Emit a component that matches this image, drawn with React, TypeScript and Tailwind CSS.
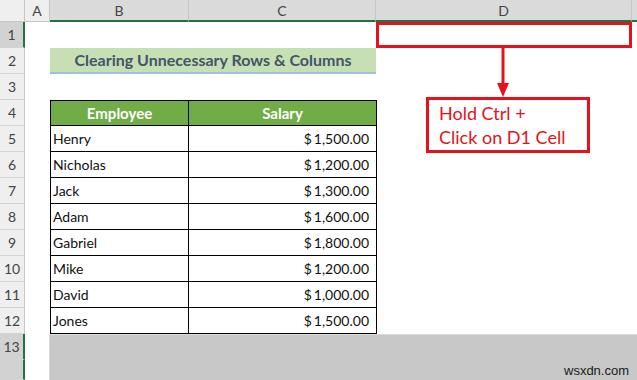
import React from "react";

const ROWS = 14;
const data: Record<number, [string, string]> = {
  5: ["Henry", "1,500.00"],
  6: ["Nicholas", "1,200.00"],
  7: ["Jack", "1,300.00"],
  8: ["Adam", "1,600.00"],
  9: ["Gabriel", "1,800.00"],
  10: ["Mike", "1,200.00"],
  11: ["David", "1,000.00"],
  12: ["Jones", "1,500.00"],
};

function RowHeader({ n, selected }: { n: number | null; selected: boolean }) {
  return (
    <div
      className={
        "w-[25px] shrink-0 h-full flex items-center justify-center text-[14px] text-[#444] border-b border-[#d4d4d4] " +
        (selected
          ? "bg-[#d2d2d2] border-r-2 border-r-[#217346]"
          : "bg-[#efefef] border-r border-r-[#c6c6c6]")
      }
    >
      {n}
    </div>
  );
}

function Row({ n }: { n: number }) {
  const selected = n === 1 || n >= 13;
  const gray = n >= 13;
  let content: React.ReactNode = null;
  if (n === 2) {
    content = (
      <div className="w-[326px] h-full bg-[#c6e0b4] border-b-2 border-[#9bc2e6] flex items-center justify-center font-bold text-[16px] text-[#44546a]">
        Clearing Unnecessary Rows &amp; Columns
      </div>
    );
  } else if (n === 4) {
    content = (
      <div className="flex w-[327px] h-full bg-[#70ad47] border border-black text-white font-bold text-[15px]">
        <div className="w-[138px] flex items-center justify-center border-r border-black">Employee</div>
        <div className="w-[187px] flex items-center justify-center">Salary</div>
      </div>
    );
  } else if (data[n]) {
    const [name, sal] = data[n];
    content = (
      <div className="flex w-[327px] h-full bg-white border-x border-b border-black text-[14px] text-[#111]">
        <div className="w-[138px] flex items-center pl-[2px] border-r border-black">{name}</div>
        <div className="w-[187px] flex items-center justify-end pr-[7px]">
          <span className="mr-[2px]">$</span>
          <span>{sal}</span>
        </div>
      </div>
    );
  }
  return (
    <div className={"flex " + (n === 14 ? "h-[20px]" : "h-[26px]")}>
      <RowHeader n={n <= 13 ? n : null} selected={selected} />
      <div className={"w-[25px] shrink-0 h-full bg-white " + (gray ? "border-r border-[#d8d8d8]" : "")} />
      {gray ? (
        <div className={"flex-1 h-full bg-[#c8c8c8] " + (n === 13 ? "border-t border-[#dcdcdc]" : "")} />
      ) : (
        <div className="flex-1 h-full bg-white">{content}</div>
      )}
    </div>
  );
}

export default function App() {
  return (
    <div
      className="relative w-[637px] h-[380px] overflow-hidden bg-white"
      style={{ fontFamily: "Lato, 'Liberation Sans', sans-serif" }}
    >
      {/* column headers */}
      <div className="flex h-[22px] text-[14px] text-[#444]">
        <div className="w-[25px] shrink-0 bg-[#efefef] border-r border-b border-[#c6c6c6]" />
        <div className="w-[25px] shrink-0 bg-[#efefef] border-r border-b border-[#c6c6c6] flex items-center justify-center">A</div>
        <div className="w-[139px] shrink-0 bg-[#dadada] border-r border-[#c6c6c6] border-b-2 border-b-[#217346] flex items-center justify-center">B</div>
        <div className="w-[187px] shrink-0 bg-[#dadada] border-r border-[#c6c6c6] border-b-2 border-b-[#217346] flex items-center justify-center">C</div>
        <div className="w-[256px] shrink-0 bg-[#dadada] border-r border-[#c6c6c6] border-b-2 border-b-[#217346] flex items-center justify-center">D</div>
        <div className="flex-1 bg-[#dadada] border-b-2 border-b-[#217346]" />
      </div>
      {Array.from({ length: ROWS }, (_, i) => (
        <Row key={i} n={i + 1} />
      ))}

      {/* annotation: D1 highlight */}
      <div className="absolute left-[376px] top-[22px] w-[256px] h-[26px] border-[3px] border-[#e3121c]" />
      <svg className="absolute left-[493px] top-[46px]" width="20" height="54" viewBox="0 0 20 54">
        <line x1="10" y1="0" x2="10" y2="40" stroke="#e3121c" strokeWidth="3" />
        <polygon points="4,37 16,37 10,51" fill="#e3121c" />
      </svg>
      <div className="absolute left-[426px] top-[97px] w-[164px] h-[56px] border-[3px] border-[#e3121c] bg-white pl-[10px] pt-[1px] text-[18px] leading-[24px] text-[#e3121c]">
        <div>Hold Ctrl +</div>
        <div>Click on D1 Cell</div>
      </div>

      <div
        className="absolute left-[564px] top-[361px] text-[13px] text-[#1a1a1a]"
        style={{ fontFamily: "'Liberation Sans', Arial, sans-serif" }}
      >
        wsxdn.com
      </div>
    </div>
  );
}
